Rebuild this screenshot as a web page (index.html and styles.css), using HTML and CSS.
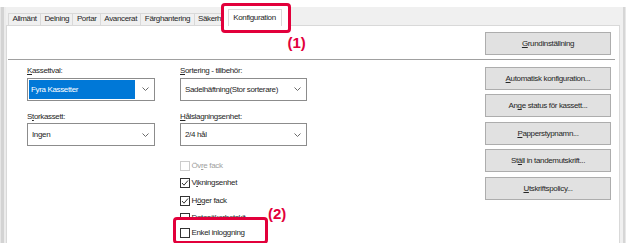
FILE: index.html
```html
<!DOCTYPE html>
<html lang="sv">
<head>
<meta charset="utf-8">
<title>Konfiguration</title>
<link rel="stylesheet" href="styles.css">
</head>
<body>
<div class="dialog">
  <div class="edge-left"></div>
  <div class="main">
    <div class="tabs">
      <div class="tab t-allm">Allmänt</div>
      <div class="tab">Delning</div>
      <div class="tab">Portar</div>
      <div class="tab">Avancerat</div>
      <div class="tab">Färghantering</div>
      <div class="tab">Säkerhet</div>
      <div class="tab-wrap">
        <div class="tab active">Konfiguration</div>
        <span class="marker m1">(1)</span>
      </div>
    </div>
    <div class="panel">
      <div class="top-row">
        <button class="btn"><u>G</u>rundinställning</button>
      </div>
      <div class="sep"></div>
      <div class="body">
        <div class="col">
          <div class="field">
            <div class="label"><u>K</u>assettval:</div>
            <div class="select">
              <span class="value selected">Fyra Kassetter</span>
              <svg class="chev" width="7" height="4" viewBox="0 0 7 4"><polyline points="0.5,0.5 3.5,3.5 6.5,0.5" fill="none" stroke="#6a6a6a" stroke-width="1"/></svg>
            </div>
          </div>
          <div class="field">
            <div class="label">S<u>t</u>orkassett:</div>
            <div class="select">
              <span class="value">Ingen</span>
              <svg class="chev" width="7" height="4" viewBox="0 0 7 4"><polyline points="0.5,0.5 3.5,3.5 6.5,0.5" fill="none" stroke="#6a6a6a" stroke-width="1"/></svg>
            </div>
          </div>
        </div>
        <div class="col col2">
          <div class="field">
            <div class="label"><u>S</u>ortering - tillbehör:</div>
            <div class="select">
              <span class="value">Sadelhäftning(Stor sorterare)</span>
              <svg class="chev" width="7" height="4" viewBox="0 0 7 4"><polyline points="0.5,0.5 3.5,3.5 6.5,0.5" fill="none" stroke="#6a6a6a" stroke-width="1"/></svg>
            </div>
          </div>
          <div class="field">
            <div class="label"><u>H</u>ålslagningsenhet:</div>
            <div class="select">
              <span class="value">2/4 hål</span>
              <svg class="chev" width="7" height="4" viewBox="0 0 7 4"><polyline points="0.5,0.5 3.5,3.5 6.5,0.5" fill="none" stroke="#6a6a6a" stroke-width="1"/></svg>
            </div>
          </div>
          <div class="checks">
            <div class="check disabled"><span class="box"></span><span>Öv<u>r</u>e fack</span></div>
            <div class="check"><span class="box"><svg width="8" height="8" viewBox="0 0 8 8"><polyline points="1,4 3,6.2 7,1.5" fill="none" stroke="#333" stroke-width="1"/></svg></span><span>V<u>i</u>kningsenhet</span></div>
            <div class="check"><span class="box"><svg width="8" height="8" viewBox="0 0 8 8"><polyline points="1,4 3,6.2 7,1.5" fill="none" stroke="#333" stroke-width="1"/></svg></span><span>H<u>ö</u>ger fack</span></div>
            <div class="check"><span class="box"></span><span>Datasäkerhetskit</span></div>
            <div class="check callout2"><span class="box"></span><span>Enkel inloggning</span><span class="marker m2">(2)</span></div>
          </div>
        </div>
        <div class="buttons">
          <button class="btn"><u>A</u>utomatisk konfiguration...</button>
          <button class="btn">An<u>g</u>e status för kassett...</button>
          <button class="btn"><u>P</u>apperstypnamn...</button>
          <button class="btn">St<u>ä</u>ll in tandemutskrift...</button>
          <button class="btn"><u>U</u>tskriftspolicy...</button>
        </div>
      </div>
    </div>
  </div>
  <div class="edge-right"></div>
</div>
</body>
</html>
```

FILE: styles.css
```css
html, body {
  margin: 0;
  background: #fff;
}

body {
  font-family: "Liberation Sans", Arial, sans-serif;
  font-size: 8px;
  letter-spacing: -0.35px;
  color: #262626;
}

.dialog {
  margin-top: 7px;
  width: 626px;
  height: 236px;
  background: #f0f0f0;
  display: flex;
}

.edge-left {
  width: 6px;
  background: linear-gradient(to right, #e6e6e6 0 1px, #d3d3d3 1px 4px, #ececec 4px 6px);
}

.edge-right {
  width: 6px;
  background: linear-gradient(to right, #f0f0f0 0 3px, #d6d6d6 3px 5px, #e8e8e8 5px 6px);
}

.main {
  flex: 1;
  display: flex;
  flex-direction: column;
  min-width: 0;
}

/* Tabs */
.tabs {
  height: 18px;
  display: flex;
  align-items: flex-end;
  padding-left: 2px;
}

.tab {
  box-sizing: border-box;
  height: 12px;
  padding: 0 3.4px;
  line-height: 9px;
  border: 1px solid #d9d9d9;
  border-bottom: none;
  margin-right: -1px;
  background: #f0f0f0;
  white-space: nowrap;
}

.tab-wrap {
  position: relative;
  z-index: 0;
  margin-left: -3px;
  margin-bottom: -1px;
}

.tab-wrap::before {
  content: "";
  position: absolute;
  left: -7px;
  top: -6px;
  width: 70px;
  height: 30px;
  box-sizing: border-box;
  border: 3px solid #e2003b;
  border-radius: 4px;
  background: #fff;
  z-index: -1;
}

.tab.active {
  height: 17px;
  width: 54px;
  padding: 2.5px 0 0;
  text-align: center;
  background: #fff;
  border-color: #d9d9d9;
  margin: 0;
}

.marker {
  position: absolute;
  color: #e2003b;
  font-weight: bold;
  font-size: 15px;
  line-height: 15px;
  letter-spacing: 0;
  white-space: nowrap;
}

.m1 {
  left: 60px;
  top: 26px;
}

/* Panel */
.panel {
  flex: 1;
  background: #fff;
  border: 1px solid #d9d9d9;
  border-bottom: none;
  display: flex;
  flex-direction: column;
}

.top-row {
  display: flex;
  justify-content: flex-end;
  padding: 6px 8px 0 0;
}

.sep {
  height: 1px;
  background: #a0a0a0;
  margin: 4px 4px 0 1px;
}

.body {
  display: flex;
  align-items: flex-start;
  padding: 6.2px 8px 0 20px;
}

.col {
  width: 128px;
  display: flex;
  flex-direction: column;
  gap: 11px;
}

.col2 {
  width: 127px;
  margin-left: 25px;
}

.field {
  display: flex;
  flex-direction: column;
  gap: 1.5px;
}

.label {
  line-height: 10px;
  white-space: nowrap;
}

.select {
  box-sizing: border-box;
  height: 23px;
  border: 1px solid #8c8c8c;
  background: #fff;
  display: flex;
  align-items: center;
  padding: 1px 5px 1px 1px;
}

.value {
  flex: 1;
  align-self: stretch;
  display: flex;
  align-items: center;
  padding-left: 3px;
  white-space: nowrap;
  overflow: hidden;
}

.value.selected {
  background: #0078d7;
  color: #fff;
  padding-left: 2px;
  margin-right: 7px;
}

.chev {
  flex: none;
}

/* Checkboxes */
.checks {
  margin-top: 3.5px;
  display: flex;
  flex-direction: column;
  gap: 7.5px;
}

.check {
  height: 10px;
  display: flex;
  align-items: center;
  gap: 1.5px;
  white-space: nowrap;
  line-height: 10px;
}

.box {
  box-sizing: border-box;
  width: 10px;
  height: 10px;
  border: 1px solid #333;
  background: #fff;
  display: flex;
  align-items: center;
  justify-content: center;
  flex: none;
}

.check.disabled {
  color: #a0a0a0;
}

.check.disabled .box {
  border-color: #cccccc;
}

.callout2 {
  position: relative;
  z-index: 0;
  margin-top: -3px;
}

.callout2::before {
  content: "";
  position: absolute;
  left: -7px;
  top: -11px;
  width: 95px;
  height: 27px;
  box-sizing: border-box;
  border: 3px solid #e2003b;
  border-radius: 4px;
  background: #fff;
  z-index: -1;
}

.m2 {
  left: 88px;
  top: -22px;
}

/* Buttons */
.buttons {
  margin-left: auto;
  margin-top: 0.8px;
  display: flex;
  flex-direction: column;
  gap: 4.5px;
}

.btn {
  box-sizing: border-box;
  width: 126px;
  height: 23px;
  padding: 0;
  background: #e1e1e1;
  border: 1px solid #adadad;
  border-radius: 0;
  font: inherit;
  letter-spacing: inherit;
  color: #262626;
  text-align: center;
}
```
